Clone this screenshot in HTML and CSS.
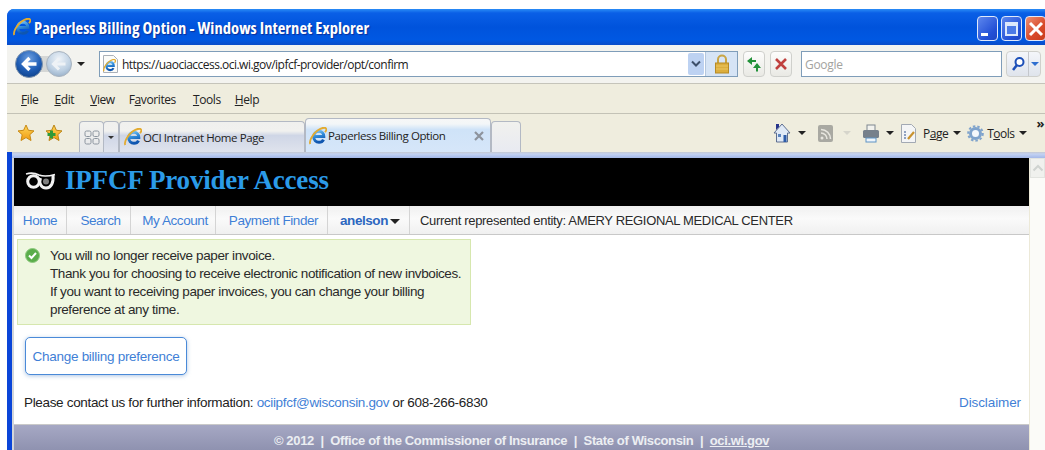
FILE: index.html
```html
<!DOCTYPE html>
<html lang="en">
<head>
<meta charset="utf-8">
<title>Paperless Billing Option</title>
<link rel="stylesheet" href="styles.css">
</head>
<body>
<svg class="defs" width="0" height="0" aria-hidden="true">
  <defs>
    <linearGradient id="ieBlue" x1="0" y1="0" x2="0.3" y2="1">
      <stop offset="0" stop-color="#7fc6f2"/><stop offset="0.5" stop-color="#2f8ad8"/><stop offset="1" stop-color="#0f56b0"/>
    </linearGradient>
    <radialGradient id="backBall" cx="0.5" cy="0.3" r="0.8">
      <stop offset="0" stop-color="#6d9fe0"/><stop offset="0.55" stop-color="#1f5db5"/><stop offset="1" stop-color="#0a3a80"/>
    </radialGradient>
    <radialGradient id="fwdBall" cx="0.5" cy="0.3" r="0.8">
      <stop offset="0" stop-color="#eef3f8"/><stop offset="0.6" stop-color="#bccfe2"/><stop offset="1" stop-color="#8ca5c0"/>
    </radialGradient>
    <linearGradient id="starGold" x1="0" y1="0" x2="0" y2="1">
      <stop offset="0" stop-color="#ffd75a"/><stop offset="1" stop-color="#f09a10"/>
    </linearGradient>
    <symbol id="ie" viewBox="0 0 18 18">
      <path d="M5.200 9.500h9.600c0-3.200-2-5.200-4.800-5.200-3 0-5.300 2.300-5.300 5.500s2.300 5.500 5.300 5.500c2.100 0 3.700-1 4.500-2.700" fill="none" stroke="url(#ieBlue)" stroke-width="3"/>
      <path d="M1.300 17C-.2 14.500 3.500 7 8.500 3.500 12.500.8 16 .3 17 1.500c.7.900 0 2.500-1 3.800" fill="none" stroke="#e3ab30" stroke-width="1.800"/>
    </symbol>
  </defs>
</svg>

<div class="window">
  <header class="titlebar">
    <svg class="ie-title"><use href="#ie"/></svg>
    <span class="title-text">Paperless Billing Option - Windows Internet Explorer</span>
    <div class="caption-buttons">
      <span class="cap cap-min"><i></i></span>
      <span class="cap cap-max"><i></i></span>
      <span class="cap cap-close"><svg width="18" height="18" viewBox="0 0 18 18"><path d="M3 3l12 12M15 3L3 15" stroke="#fff" stroke-width="3"/></svg></span>
    </div>
  </header>

  <div class="addressbar">
    <svg class="nav-balls" width="58" height="32" viewBox="0 0 58 32">
      <rect x="14" y="8" width="38" height="16" rx="8" fill="#d5d7d6"/>
      <circle cx="44" cy="16" r="12.500" fill="url(#fwdBall)" stroke="#a8b3bf"/>
      <path d="M50.500 16h-11M44 10.500l-5.500 5.500 5.500 5.500" fill="none" stroke="#eef2f6" stroke-width="3"/>
      <circle cx="14" cy="16" r="13.500" fill="url(#backBall)" stroke="#7e93ad"/>
      <path d="M21.500 16H9M14.500 10l-6 6 6 6" fill="none" stroke="#fff" stroke-width="3.400"/>
    </svg>
    <span class="caret caret-back"></span>
    <div class="url-box">
      <svg class="page-ie" width="17" height="20" viewBox="0 0 17 20">
        <path d="M1.500 1.500h10l4 4v13h-14z" fill="#fbfbf8" stroke="#aab0b8"/>
        <use href="#ie" x="1" y="5" width="13" height="13"/>
      </svg>
      <span class="url-text">https://uaociaccess.oci.wi.gov/ipfcf-provider/opt/confirm</span>
      <span class="url-drop"><svg width="10" height="8" viewBox="0 0 10 8"><path d="M1 1.500l4 4 4-4" fill="none" stroke="#3d4f6a" stroke-width="2"/></svg></span>
      <span class="url-lock">
        <svg width="16" height="20" viewBox="0 0 16 20">
          <path d="M4 9V5.500a4 4 0 0 1 8 0V9" fill="none" stroke="#c9a544" stroke-width="2"/>
          <rect x="1.500" y="9" width="13" height="10" fill="#dcae3d" stroke="#b68a25"/>
          <path d="M2 12h12M2 15h12" stroke="#eac663"/>
        </svg>
      </span>
    </div>
    <span class="tool-btn">
      <svg width="16" height="16" viewBox="0 0 16 16"><path d="M1 5l5-4v3h4v2H6v3zM11 7l4 5h-3v3.500h-2V12H7z" fill="#23923a"/></svg>
    </span>
    <span class="tool-btn stop-btn">
      <svg width="14" height="14" viewBox="0 0 14 14"><path d="M2 2l10 10M12 2L2 12" stroke="#c0403e" stroke-width="2.600"/></svg>
    </span>
    <div class="search-box">Google</div>
    <div class="search-btn">
      <span class="search-mag"><svg width="16" height="16" viewBox="0 0 16 16"><circle cx="9.500" cy="6" r="4" fill="#fff" stroke="#1c4fb8" stroke-width="2"/><path d="M7 9l-4 5" stroke="#1c4fb8" stroke-width="2.600"/></svg></span>
      <span class="search-more"></span>
    </div>
  </div>

  <nav class="menubar">
    <span class="menu m-file"><u>F</u>ile</span>
    <span class="menu m-edit"><u>E</u>dit</span>
    <span class="menu m-view"><u>V</u>iew</span>
    <span class="menu m-fav">F<u>a</u>vorites</span>
    <span class="menu m-tools"><u>T</u>ools</span>
    <span class="menu m-help"><u>H</u>elp</span>
  </nav>

  <div class="tabbar">
    <svg class="star star-fav" width="18" height="18" viewBox="0 0 18 18"><path d="M9 1l2.400 5.300 5.600.6-4.200 3.800 1.200 5.800L9 13.600l-5 2.900 1.200-5.800L1 6.900l5.600-.6z" fill="url(#starGold)" stroke="#c78a16"/></svg>
    <svg class="star star-add" width="18" height="18" viewBox="0 0 18 18"><path d="M9 1l2.400 5.300 5.600.6-4.200 3.800 1.200 5.800L9 13.600l-5 2.900 1.200-5.800L1 6.900l5.600-.6z" fill="url(#starGold)" stroke="#b98518"/><path d="M2.500 10.500h8M6.500 6.500v8" stroke="#2f9a38" stroke-width="3"/></svg>
    <div class="tab tab-quick">
      <svg width="16" height="15" viewBox="0 0 16 15"><g fill="none" stroke="#8c959f"><rect x="1" y="1" width="6" height="5.500" rx="1.500"/><rect x="9" y="1" width="6" height="5.500" rx="1.500"/><rect x="1" y="8.500" width="6" height="5.500" rx="1.500"/><rect x="9" y="8.500" width="6" height="5.500" rx="1.500"/></g></svg>
    </div>
    <div class="tab tab-list"><span class="caret caret-small"></span></div>
    <div class="tab tab-oci">
      <svg class="tab-ie"><use href="#ie"/></svg>
      <span>OCI Intranet Home Page</span>
    </div>
    <div class="tab tab-active">
      <svg class="tab-ie"><use href="#ie"/></svg>
      <span class="tab-label">Paperless Billing Option</span>
      <svg class="tab-close" width="10" height="10" viewBox="0 0 10 10"><path d="M1 1l8 8M9 1L1 9" stroke="#8d939c" stroke-width="2.200"/></svg>
    </div>
    <div class="tab tab-new"></div>

    <div class="cmd-bar">
      <svg class="cmd-home" width="18" height="20" viewBox="0 0 18 20">
        <path d="M9 1L1 10h2.500v9h11v-9H17z" fill="#dfe9f6" stroke="#5e6f90"/>
        <path d="M3 1h3v3l-3 3z" fill="#27348b"/>
        <rect x="10.500" y="12" width="3" height="7" fill="#2d5ca8"/>
        <rect x="5" y="11" width="3" height="3" fill="#5b84bd"/>
      </svg>
      <span class="caret cmd-caret-home"></span>
      <svg class="cmd-feed" width="15" height="17" viewBox="0 0 15 17">
        <rect width="15" height="17" rx="2" fill="#a9a9a2"/>
        <circle cx="4" cy="13" r="1.500" fill="#e7e6df"/>
        <path d="M3 8a6 6 0 0 1 6 6M3 4.500a9.500 9.500 0 0 1 9.500 9.500" fill="none" stroke="#e7e6df" stroke-width="1.600"/>
      </svg>
      <span class="caret cmd-caret-feed"></span>
      <svg class="cmd-print" width="18" height="19" viewBox="0 0 18 19">
        <rect x="5" y="1" width="8" height="6" fill="#f2f2ee" stroke="#7f8790"/>
        <rect x="1" y="6" width="16" height="8" rx="1.500" fill="#76808b"/>
        <rect x="4" y="14" width="10" height="4" fill="#eef5fb" stroke="#5e93c4"/>
      </svg>
      <span class="caret cmd-caret-print"></span>
      <svg class="cmd-page" width="15" height="19" viewBox="0 0 15 19">
        <path d="M.5.500h10l4 4v14H.5z" fill="#f4f5f6" stroke="#a2a9b3"/>
        <path d="M3 8h2M3 11h2M3 14h2" stroke="#6f86b0" stroke-width="1.400"/>
        <path d="M7 15l6-7" stroke="#c9932e" stroke-width="2.200"/>
      </svg>
      <span class="cmd-label cmd-page-label">P<u>a</u>ge</span>
      <span class="caret cmd-caret-page"></span>
      <svg class="cmd-gear" width="17" height="19" viewBox="0 0 17 19">
        <circle cx="8.500" cy="9.500" r="5" fill="#f4f8fc" stroke="#7fa3cc" stroke-width="3"/>
        <circle cx="8.500" cy="9.500" r="7.300" fill="none" stroke="#7fa3cc" stroke-width="2" stroke-dasharray="2.500 2"/>
      </svg>
      <span class="cmd-label cmd-tools-label">T<u>o</u>ols</span>
      <span class="caret cmd-caret-tools"></span>
      <span class="cmd-more">»</span>
    </div>
  </div>
  <div class="tab-strip"></div>

  <div class="viewport">
    <div class="page">
      <div class="site-header">
        <svg class="site-logo" width="32" height="20" viewBox="0 0 32 20">
          <circle cx="8.500" cy="10.500" r="5.800" fill="none" stroke="#f2f2f2" stroke-width="3"/>
          <path d="M1 3c5-1.500 9-1 13 1 4 1.500 9 1.500 16-.5" fill="none" stroke="#f2f2f2" stroke-width="1.600"/>
          <circle cx="21" cy="10.500" r="3" fill="#808080"/>
          <path d="M15.500 7c-1.800 5 .5 10 5.500 10s7.800-5 7-13" fill="none" stroke="#f2f2f2" stroke-width="3"/>
        </svg>
        <h1 class="site-title">IPFCF Provider Access</h1>
      </div>
      <nav class="site-nav">
        <a class="nav-item nav-home">Home</a>
        <a class="nav-item nav-search">Search</a>
        <a class="nav-item nav-account">My Account</a>
        <a class="nav-item nav-finder">Payment Finder</a>
        <a class="nav-item nav-user">anelson<span class="user-caret"></span></a>
        <span class="nav-entity">Current represented entity: AMERY REGIONAL MEDICAL CENTER</span>
      </nav>
      <div class="notice">
        <svg class="notice-icon" width="15" height="15" viewBox="0 0 15 15">
          <circle cx="7.500" cy="7.500" r="7" fill="#5aad4a" stroke="#8dc97f"/>
          <path d="M4 7.500l2.500 2.500 4.500-5" fill="none" stroke="#fff" stroke-width="2"/>
        </svg>
        <p class="notice-text">You will no longer receive paper invoice.<br>Thank you for choosing to receive electronic notification of new invboices.<br>If you want to receiving paper invoices, you can change your billing<br>preference at any time.</p>
      </div>
      <a class="change-btn">Change billing preference</a>
      <div class="contact-row">
        <p class="contact">Please contact us for further information: <a class="link">ociipfcf@wisconsin.gov</a> or 608-266-6830</p>
        <a class="link disclaimer">Disclaimer</a>
      </div>
      <footer class="site-footer">© 2012&nbsp; |&nbsp; Office of the Commissioner of Insurance&nbsp; |&nbsp; State of Wisconsin&nbsp; |&nbsp; <u>oci.wi.gov</u></footer>
    </div>
    <div class="scrollbar"><span class="scroll-up"><svg width="12" height="8" viewBox="0 0 12 8"><path d="M1.500 6.500L6 2l4.500 4.500" fill="none" stroke="#cfd3d0" stroke-width="2"/></svg></span></div>
  </div>
</div>
</body>
</html>
```

FILE: styles.css
```css
* { box-sizing: border-box; }

html, body {
  margin: 0;
  height: 450px;
  overflow: hidden;
  background: #fff;
}

.defs { display: block; height: 0; }

.window {
  width: 1038px;
  height: 441px;
  margin: 9px 0 0 7px;
  display: flex;
  flex-direction: column;
  background: #0a45d8;
  border-radius: 7px 0 0 0;
  overflow: hidden;
  font-family: "Liberation Sans", Arial, sans-serif;
}

/* Title bar */
.titlebar {
  height: 36px;
  flex: none;
  display: flex;
  align-items: center;
  padding-left: 6px;
  background: linear-gradient(#2a8cf6 0, #0a5fe6 4px, #0053dc 50%, #0058e2 85%, #0a4cc8 100%);
}
.ie-title { width: 18px; height: 18px; flex: none; }
.title-text {
  margin: 1px 0 0 3px;
  color: #fff;
  font: bold 16.5px "Open Sans", sans-serif;
  font-stretch: 85%;
  letter-spacing: 0.05px;
  text-shadow: 1px 1px 1px #0a2f9a;
  white-space: nowrap;
}
.caption-buttons { margin-left: auto; display: flex; gap: 3px; margin-top: 3px; margin-right: -1px; }
.cap {
  width: 21px;
  height: 25px;
  border: 1px solid #dfe9fb;
  border-radius: 4px;
  display: flex;
  align-items: center;
  justify-content: center;
  background: linear-gradient(135deg, #5d87ee, #2350d6 70%, #1d46c4);
}
.cap-min i { display: block; width: 7px; height: 3px; margin: 12px 6px 0 0; background: #fff; }
.cap-max i { display: block; width: 13px; height: 14px; border: 2px solid #dce8fb; border-top-width: 4px; background: #4b7ae6; }
.cap-close { background: linear-gradient(135deg, #ee9073, #d8492a 60%, #c93c1c); }

/* Address row */
.addressbar {
  height: 39px;
  flex: none;
  display: flex;
  align-items: center;
  padding: 0 0 0 8px;
  background: #f3f3ef;
  border-bottom: 1px solid #c5c4ba;
}
.nav-balls { flex: none; }
.caret {
  display: inline-block;
  flex: none;
  width: 0;
  height: 0;
  border: 4px solid transparent;
  border-top: 4px solid #222;
  border-bottom: 0;
}
.caret-back { margin-left: 4px; }
.url-box {
  margin-left: 14px;
  width: 639px;
  height: 26px;
  flex: none;
  display: flex;
  align-items: center;
  border: 1px solid #7f9db9;
  background: #fff;
}
.page-ie { margin-left: 2px; flex: none; }
.url-text { margin-left: 3px; font: 12px "Open Sans", sans-serif; letter-spacing: -0.52px; color: #222; white-space: nowrap; }
.url-drop {
  margin-left: auto;
  width: 16px;
  height: 22px;
  display: flex;
  align-items: center;
  justify-content: center;
  background: #bdd2f2;
  border-radius: 2px;
}
.url-lock {
  width: 32px;
  height: 24px;
  margin-left: 1px;
  display: flex;
  align-items: center;
  justify-content: center;
  background: #d6e4f5;
  border-left: 1px solid #b4c7de;
}
.tool-btn {
  width: 22px;
  height: 26px;
  flex: none;
  margin-left: 5px;
  display: flex;
  align-items: center;
  justify-content: center;
  border: 1px solid #cfd0cc;
  border-radius: 4px;
  background: linear-gradient(#fdfdfc, #e9e9e4);
}
.search-box {
  width: 201px;
  height: 26px;
  flex: none;
  margin-left: 9px;
  padding-left: 3px;
  display: flex;
  align-items: center;
  border: 1px solid #7f9db9;
  background: #fff;
  color: #a3a3a0;
  font: 12px "Open Sans", sans-serif;
  letter-spacing: -0.3px;
}
.search-btn {
  margin-left: 4px;
  width: 35px;
  height: 26px;
  flex: none;
  display: flex;
  border: 1px solid #cfd0cc;
  border-radius: 4px;
  background: linear-gradient(#f4f6fa, #dfe4ec);
}
.search-mag { width: 22px; display: flex; align-items: center; justify-content: center; border-right: 1px solid #c4c7cc; }
.search-more { width: 0; height: 0; margin: 10px 0 0 2px; border: 4px solid transparent; border-top: 4px solid #2f6fd0; border-bottom: 0; }

/* Menu row */
.menubar {
  height: 30px;
  flex: none;
  display: flex;
  align-items: center;
  padding-top: 2px;
  background: #efedde;
  border-bottom: 1px solid #c3c2b6;
  font: 12px "Open Sans", sans-serif;
  color: #222;
}
.menu { letter-spacing: -0.4px; }
.m-file { margin-left: 14px; }
.m-edit { margin-left: 16px; }
.m-view { margin-left: 16px; }
.m-fav { margin-left: 14px; }
.m-tools { margin-left: 17px; }
.m-help { margin-left: 14px; }

/* Tab row */
.tabbar {
  height: 38px;
  flex: none;
  display: flex;
  align-items: flex-end;
  background: #efedde;
  font: 11.5px "Open Sans", sans-serif;
  color: #222;
}
.star { flex: none; align-self: flex-start; margin-top: 10px; }
.star-fav { margin-left: 10px; }
.star-add { margin-left: 10px; }
.tab {
  height: 31px;
  flex: none;
  display: flex;
  align-items: center;
  border: 1px solid #b3b9c4;
  border-bottom: 0;
  border-radius: 4px 4px 0 0;
  background: linear-gradient(#f0f0ee 0, #f1f1ef 30%, #cfd6e6 45%, #dfe3ed 100%);
}
.tab-quick { width: 25px; margin-left: 16px; justify-content: center; background: linear-gradient(#f2f2ef, #e4e6ea); }
.tab-list { width: 16px; justify-content: center; margin-left: -1px; }
.caret-small { border-top-color: #333; border-width: 3px; border-top-width: 3px; }
.tab-oci { width: 186px; padding-left: 4px; letter-spacing: -0.4px; }
.tab-ie { width: 18px; height: 18px; flex: none; margin-right: 1px; }
.tab-active {
  width: 186px;
  height: 34px;
  padding-left: 3px;
  letter-spacing: -0.4px;
  background: linear-gradient(#f6f7f7 0, #f3f6f8 15%, #cfe3f8 32%, #d6e6f9 100%);
}
.tab-label { white-space: nowrap; }
.tab-close { margin-left: auto; margin-right: 6px; }
.tab-new { width: 30px; background: linear-gradient(#f1f1ee, #e8eaf1); }

.cmd-bar {
  margin-left: auto;
  height: 38px;
  align-self: flex-start;
  display: flex;
  align-items: center;
  position: relative;
  width: 272px;
  flex: none;
  font-size: 12px;
  letter-spacing: -0.5px;
}
.cmd-home { flex: none; }
.cmd-caret-home { margin-left: 7px; }
.cmd-feed { margin-left: 12px; flex: none; }
.cmd-caret-feed { margin-left: 10px; border-top-color: #d6d5cb; }
.cmd-print { margin-left: 11px; flex: none; }
.cmd-caret-print { margin-left: 6px; }
.cmd-page { margin-left: 7px; flex: none; }
.cmd-page-label { margin-left: 7px; }
.cmd-caret-page { margin-left: 5px; }
.cmd-gear { margin-left: 6px; flex: none; }
.cmd-tools-label { margin-left: 3px; }
.cmd-caret-tools { margin-left: 5px; }
.cmd-more { position: absolute; right: 1px; top: 0; font: bold 13px "Open Sans", sans-serif; color: #222; }

/* Band between the tabs and the page */
.tab-strip {
  height: 6px;
  flex: none;
  margin-left: 5px;
  background: linear-gradient(#c5c9d2, #c3d2f2 35%, #a4b8e8);
}

/* Page content */
.viewport {
  flex: 1;
  min-height: 0;
  display: flex;
  padding-left: 5px;
}
.page {
  flex: 1;
  min-width: 0;
  display: flex;
  flex-direction: column;
  background: #fff;
  border-left: 2px solid #d3d6da;
}
.site-header {
  height: 48px;
  flex: none;
  display: flex;
  align-items: center;
  padding: 0 0 3px 11px;
  background: #000;
}
.site-logo { flex: none; }
.site-title {
  margin: 0 0 0 8px;
  color: #2b9be8;
  font: bold 27px "Liberation Serif", serif;
  letter-spacing: -0.2px;
  white-space: nowrap;
}
.site-nav {
  height: 29px;
  flex: none;
  display: flex;
  align-items: stretch;
  background: linear-gradient(#f0f0f0, #fafafa 45%, #f0f0f0);
  border-bottom: 1px solid #c8c8c8;
  font-size: 13.5px;
  letter-spacing: -0.43px;
}
.nav-item {
  display: flex;
  align-items: center;
  justify-content: center;
  color: #3f7fd6;
  border-right: 1px solid #d4d4d4;
}
.nav-home { width: 53px; }
.nav-search { width: 64px; padding-left: 4px; }
.nav-account { width: 85px; padding-left: 4px; }
.nav-finder { width: 112px; padding-left: 4px; }
.nav-user { width: 82px; padding-left: 3px; color: #2d67bf; font-weight: bold; }
.user-caret { width: 0; height: 0; margin: 3px 0 0 2px; border: 5px solid transparent; border-top: 5px solid #222; border-bottom: 0; }
.nav-entity { align-self: center; margin-left: 10px; color: #2a2a2a; font-size: 13px; letter-spacing: -0.33px; white-space: nowrap; }

.notice {
  width: 454px;
  height: 86px;
  flex: none;
  margin: 4px 0 0 3px;
  padding: 7px 0 0 7px;
  display: flex;
  background: #eff7e0;
  border: 1px solid #d6e7ae;
}
.notice-icon { flex: none; margin-top: 1px; }
.notice-text {
  margin: 0 0 0 10px;
  font-size: 13.5px;
  line-height: 18px;
  letter-spacing: -0.38px;
  color: #2a2a2a;
  white-space: nowrap;
}
.change-btn {
  width: 162px;
  height: 38px;
  flex: none;
  margin: 12px 0 0 11px;
  display: flex;
  align-items: center;
  justify-content: center;
  background: #fff;
  border: 1px solid #4a8ad8;
  border-radius: 5px;
  box-shadow: 0 1px 4px rgba(120, 160, 210, 0.6);
  color: #3f7fd6;
  font-size: 13.5px;
  letter-spacing: -0.28px;
}
.contact-row {
  flex: none;
  display: flex;
  justify-content: space-between;
  margin: 19px 8px 0 10px;
  font-size: 13.5px;
  line-height: 18px;
  letter-spacing: -0.33px;
  color: #222;
}
.contact { margin: 0; }
.link { color: #3f7fd6; }
.disclaimer { letter-spacing: -0.1px; }
.site-footer {
  margin-top: auto;
  height: 26px;
  flex: none;
  display: flex;
  align-items: center;
  justify-content: center;
  padding-top: 6px;
  white-space: pre;
  background: linear-gradient(#a6a8c4, #8f92b0);
  border-top: 1px solid #c9c9c9;
  color: #eceef2;
  font-size: 13px;
  font-weight: bold;
  letter-spacing: -0.35px;
}

.scrollbar {
  width: 16px;
  flex: none;
  background: #fbfbf8;
  border-left: 1px solid #ece9d8;
}
.scroll-up {
  display: flex;
  align-items: center;
  justify-content: center;
  height: 20px;
  background: #f0f1ee;
  border: 1px solid #e2e4e0;
}
```
